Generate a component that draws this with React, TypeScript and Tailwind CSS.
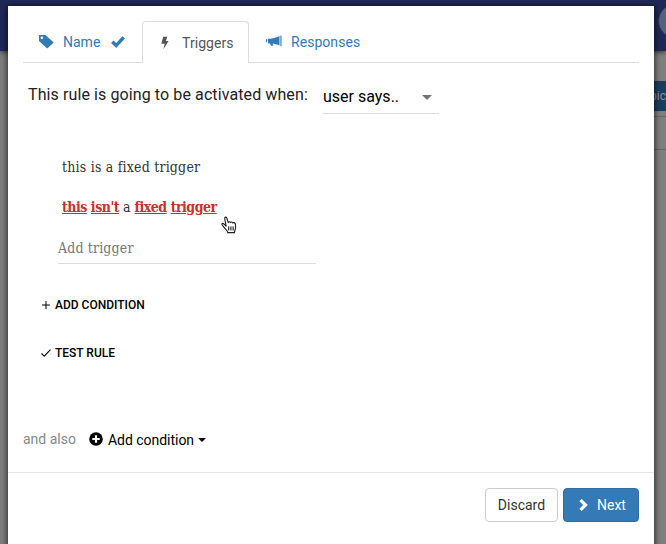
import React from "react";

const slab = "font-['Roboto_Slab','DejaVu_Serif_Condensed','DejaVu_Serif',serif]";
const changed = "text-[#c9302c] underline tracking-[-0.5px]";

function TagIcon() {
  return (
    <svg className="block h-[14px] w-[15px]" viewBox="0 0 15 15" preserveAspectRatio="none" fill="currentColor">
      <path fillRule="evenodd" d="M0 0H6.4L14.2 7.4Q14.8 8 14.2 8.6L8.8 14Q8.2 14.5 7.6 14L0 6.4ZM2.9 1.6A1.35 1.35 0 1 0 2.9 4.3A1.35 1.35 0 1 0 2.9 1.6Z" />
    </svg>
  );
}

function OkIcon() {
  return (
    <svg className="block h-3 w-[14px]" viewBox="0 0 14 12" fill="currentColor">
      <path d="M11.4.2 14 2.5 5.6 11.6Q5.2 12 4.8 11.6L0 6.9 2.5 4.5 5.2 6.9Z" />
    </svg>
  );
}

function FlashIcon() {
  return (
    <svg className="block h-[14px] w-2" viewBox="0 0 8 14" fill="currentColor">
      <path d="M2.2.8H6.2L5 5H7.6L2.4 13.3 3.7 7.8H.3Z" />
    </svg>
  );
}

function BullhornIcon() {
  return (
    <svg className="-mt-0.5 block h-3 w-4" viewBox="0 0 16 12" fill="currentColor">
      <path d="M0 4.2H1V7.2H0ZM1.6 3.8C5.5 3.7 10 2.7 13.5.9V10.6C10.8 9.5 8.7 8.9 6.6 8.6L7.3 10.8H5L4.1 8.4H2.2ZM14.4.5H15.5V11.2H14.4Z" />
    </svg>
  );
}

function HandCursor() {
  return (
    <svg className="absolute left-[213px] top-[210px] h-[18px] w-4" viewBox="0 0 16 18" fill="white" stroke="#222" strokeWidth="1.15" strokeLinejoin="round" strokeLinecap="round">
      <path d="M5.1 10.2 3.7 2.5C3.4.9 5.3.5 5.8 2L7.2 6.6C7.6 5.4 9.2 5.5 9.5 6.6 10 5.6 11.5 5.8 11.8 7 12.3 6.2 14.2 6.5 14.4 8.2L14.6 11.5C14.6 13.2 13.5 14.5 13.5 16.6H6.8C6.6 14.7 4.8 13.4 3.5 11.8L1.1 8.9C.3 7.7 1.8 6.9 2.8 7.8Z" />
      <path d="M7.7 10.8V14M9.9 10.8V14M12.1 10.8V14" fill="none" />
    </svg>
  );
}

export default function App() {
  return (
    <div className="relative h-[544px] w-[666px] overflow-hidden bg-[#7f7f7f] font-['Roboto',sans-serif] text-sm">
      <div className="flex h-[51px] justify-end overflow-hidden bg-[#1f2858] shadow-[0_1px_5px_rgba(0,0,0,0.6)]">
        <div className="-mr-[26px] mt-[4px] h-[34px] w-[34px] shrink-0 rounded-full border border-[#34383c] bg-[#526481]" />
      </div>
      <div className="ml-auto mt-[30px] flex h-[30px] w-[60px] justify-end bg-[#193f60] text-[#8b9298]">
        <span className="text-xs leading-[30px]">pic</span>
      </div>
      <div className="ml-auto mt-[5px] h-[34px] w-[60px] border-y border-[#666]" />

      <div className="absolute left-2 top-1.5 flex h-[560px] w-[646px] flex-col bg-white shadow-[0_1px_6px_1px_rgba(0,0,0,0.65)]">
        <div className="mx-[15px] mt-[15px] flex h-[42px] border-b border-[#ddd] text-[#337ab7]">
          <div className="flex w-[119px] items-center pl-4">
            <TagIcon />
            <span className="ml-[9px] w-12">Name</span>
            <OkIcon />
          </div>
          <div className="flex h-[42px] w-[107px] items-center rounded-t border border-b-0 border-[#ddd] bg-white pl-[18px] text-[#555]">
            <FlashIcon />
            <span className="ml-[13px] tracking-[0.05px]">Triggers</span>
          </div>
          <div className="flex items-center pl-[17px]">
            <BullhornIcon />
            <span className="ml-[9px] tracking-[0.05px]">Responses</span>
          </div>
        </div>

        <div className="ml-5 mt-[15px] flex h-9 text-base">
          <span className="w-[295px] whitespace-nowrap pt-[5px] leading-6 tracking-[0.1px] text-[#222]">This rule is going to be activated when:</span>
          <div className="flex w-[116px] items-center justify-between border-b border-[#ddd] pr-[7px] pt-[3px] text-black">
            <span>user says..</span>
            <span className="border-x-[5px] border-t-[5px] border-x-transparent border-t-[#757575]" />
          </div>
        </div>

        <div className={`ml-[50px] mt-[37px] w-[258px] text-sm text-[#333] ${slab}`}>
          <p className="h-10 whitespace-nowrap pl-1 pt-[6px] leading-5 tracking-[0.2px]">this is a fixed trigger</p>
          <p className="h-[42px] whitespace-nowrap pl-1 pt-[6px] leading-5">
            <b className={changed}>this</b> <b className={changed}>isn't</b> a <b className={changed}>fixed</b> <b className={changed}>trigger</b>
          </p>
          <p className="h-[31px] border-b border-[#ddd] pt-[5px] leading-5 tracking-[0.15px] text-[#777]">Add trigger</p>
        </div>

        <div className="ml-[34px] mt-[33px] flex h-4 items-center text-xs font-medium text-black">
          <svg className="h-[8px] w-[8px]" viewBox="0 0 8 8" stroke="currentColor" strokeWidth="1"><path d="M0 4H8M4 0V8" /></svg>
          <span className="ml-[5px]">ADD CONDITION</span>
        </div>
        <div className="ml-[33px] mt-8 flex h-4 items-center text-xs font-medium text-black">
          <svg className="h-[8px] w-[10px]" viewBox="0 0 10 8" fill="none" stroke="currentColor" strokeWidth="1.1"><path d="M.5 4.5 3.2 7.2 9.5.7" /></svg>
          <span className="ml-1">TEST RULE</span>
        </div>

        <div className="ml-[15px] mt-[68px] flex h-5 items-center text-black">
          <span className="w-[66px] text-[#888]">and also</span>
          <svg className="h-[14px] w-[14px]" viewBox="0 0 14 14">
            <circle cx="7" cy="7" r="6.8" />
            <path d="M7 3.3V10.7M3.3 7H10.7" stroke="white" strokeWidth="2.2" />
          </svg>
          <span className="ml-[5px] mt-0.5 tracking-[-0.03px]">Add condition</span>
          <span className="ml-1 mt-0.5 border-x-4 border-t-4 border-x-transparent border-t-black" />
        </div>

        <div className="mt-[23px] flex justify-end gap-[5px] border-t border-[#e5e5e5] pr-[15px] pt-[15px]">
          <button className="h-[34px] w-[73px] rounded border border-[#ccc] bg-white text-[#333]">Discard</button>
          <button className="flex h-[34px] w-[76px] items-center rounded border border-[#2e6da4] bg-[#337ab7] pl-[15px] text-white">
            <svg className="h-3 w-[9px]" viewBox="0 0 9 12" fill="none" stroke="currentColor" strokeWidth="3.2"><path d="M1.5 1.1 6.5 6 1.5 10.9" /></svg>
            <span className="ml-[9px]">Next</span>
          </button>
        </div>
        <HandCursor />
      </div>
    </div>
  );
}
